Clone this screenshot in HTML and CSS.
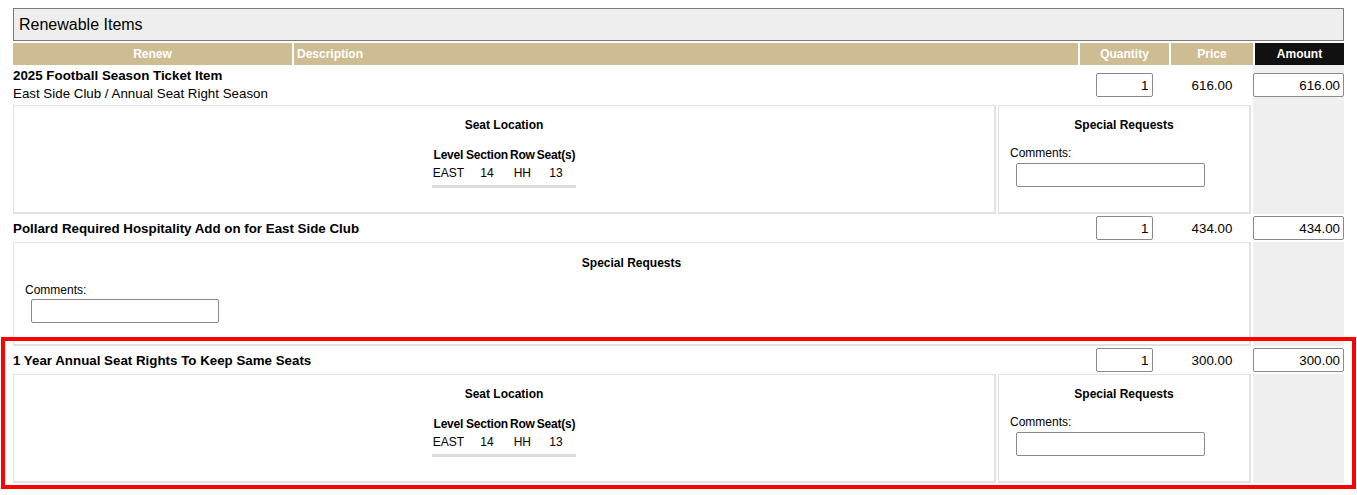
FILE: index.html
```html
<!DOCTYPE html>
<html>
<head>
<meta charset="utf-8">
<link rel="stylesheet" href="styles.css">
</head>
<body>
<div class="wrap">
  <div class="title">Renewable Items</div>
  <div class="thead">
    <div class="th th-center">Renew</div>
    <div class="th th-left">Description</div>
    <div class="th th-center">Quantity</div>
    <div class="th th-center">Price</div>
    <div class="th th-center th-dark">Amount</div>
  </div>

  <div class="item">
    <div class="item-head item-head-tall">
      <div class="desc">
        <div class="item-name">2025 Football Season Ticket Item</div>
        <div class="item-sub">East Side Club / Annual Seat Right Season</div>
      </div>
      <div class="qty"><input class="num-input qty-input" value="1"></div>
      <div class="price">616.00</div>
      <div class="amount amount-gray"><input class="num-input amt-input" value="616.00"></div>
    </div>
    <div class="item-detail">
      <div class="box seat-box">
        <div class="box-title">Seat Location</div>
        <table class="seat-table">
          <tr><th>Level</th><th>Section</th><th>Row</th><th>Seat(s)</th></tr>
          <tr><td>EAST</td><td>14</td><td>HH</td><td>13</td></tr>
        </table>
      </div>
      <div class="box special-box">
        <div class="box-title">Special Requests</div>
        <div class="comments-label">Comments:</div>
        <input class="comment-input">
      </div>
      <div class="gray-col"></div>
    </div>
  </div>

  <div class="item">
    <div class="item-head">
      <div class="desc">
        <div class="item-name">Pollard Required Hospitality Add on for East Side Club</div>
      </div>
      <div class="qty"><input class="num-input qty-input" value="1"></div>
      <div class="price">434.00</div>
      <div class="amount"><input class="num-input amt-input" value="434.00"></div>
    </div>
    <div class="item-detail">
      <div class="box special-wide">
        <div class="box-title">Special Requests</div>
        <div class="comments-label">Comments:</div>
        <input class="comment-input comment-input-wide">
      </div>
      <div class="gray-col"></div>
    </div>
  </div>

  <div class="item">
    <div class="item-head">
      <div class="desc">
        <div class="item-name">1 Year Annual Seat Rights To Keep Same Seats</div>
      </div>
      <div class="qty"><input class="num-input qty-input" value="1"></div>
      <div class="price">300.00</div>
      <div class="amount"><input class="num-input amt-input" value="300.00"></div>
    </div>
    <div class="item-detail">
      <div class="box seat-box">
        <div class="box-title">Seat Location</div>
        <table class="seat-table">
          <tr><th>Level</th><th>Section</th><th>Row</th><th>Seat(s)</th></tr>
          <tr><td>EAST</td><td>14</td><td>HH</td><td>13</td></tr>
        </table>
      </div>
      <div class="box special-box">
        <div class="box-title">Special Requests</div>
        <div class="comments-label">Comments:</div>
        <input class="comment-input">
      </div>
      <div class="gray-col"></div>
    </div>
  </div>
</div>
<div class="highlight"></div>
</body>
</html>
```

FILE: styles.css
```css
* { box-sizing: border-box; }
html, body { margin: 0; padding: 0; background: #fff; }
body {
  font-family: "Liberation Sans", Arial, sans-serif;
  font-size: 13.33px;
  color: #000;
  position: relative;
  width: 1357px;
  height: 495px;
  overflow: hidden;
}
.wrap {
  margin: 8px 0 0 13px;
  width: 1331px;
}
.title {
  height: 33px;
  border: 1px solid #7a7a7a;
  background: #eeeeee;
  font-size: 16px;
  line-height: 31px;
  padding-left: 5px;
}
.thead {
  margin-top: 2px;
  display: grid;
  grid-template-columns: 279px 786px 91px 84px 91px;
  height: 22px;
}
.th {
  background: #cebc92;
  color: #fff;
  font-weight: bold;
  font-size: 12px;
  line-height: 22px;
  border-left: 2px solid #fff;
}
.th:first-child { border-left: none; }
.th-center { text-align: center; }
.th-left { padding-left: 3px; }
.th-dark { background: #111; }

.item-head {
  display: grid;
  grid-template-columns: 1065px 91px 84px 91px;
  height: 28px;
  align-items: center;
}
.item-head-tall { height: 40px; }
.desc { align-self: center; }
.item-name { font-weight: bold; line-height: 17px; }
.item-sub { line-height: 20px; }
.qty { display: flex; justify-content: center; padding-left: 1px; }
.price { text-align: center; padding-left: 2px; }
.amount { height: 100%; display: flex; align-items: center; }
.amount-gray { background: #f0f0f0; }
.num-input {
  height: 24px;
  border: 1px solid #8a8a8a;
  border-radius: 2px;
  background: #fff;
  font-family: "Liberation Sans", Arial, sans-serif;
  font-size: 13.33px;
  text-align: right;
  padding: 0 3px;
  margin: 0;
  color: #000;
}
.qty-input { width: 57px; }
.amt-input { width: 91px; }

.item-detail {
  display: grid;
  grid-template-columns: 983px 253px 91px;
  column-gap: 2px;
}
.box {
  border: 1px solid #e2e2e2;
  border-right-width: 2px;
  border-bottom-width: 2px;
  background: #fff;
}
.seat-box, .special-box { height: 109px; }
.special-wide { grid-column: 1 / span 2; height: 104px; }
.gray-col { background: #efefef; }
.box-title {
  font-weight: bold;
  font-size: 12px;
  text-align: center;
  line-height: 14px;
  padding-top: 12px;
}
.special-wide .box-title { padding-top: 13px; }
.seat-table {
  margin: 14px auto 0;
  border-collapse: collapse;
  font-size: 12px;
  border-bottom: 3px solid #dcdcdc;
}
.seat-table th {
  font-weight: bold;
  padding: 0 1px;
  line-height: 18px;
  text-align: center;
  letter-spacing: -0.2px;
}
.seat-table td {
  padding: 0 1px 3px;
  line-height: 18px;
  text-align: center;
}
.comments-label {
  font-size: 12px;
  margin-top: 14px;
  margin-left: 11px;
  line-height: 14px;
}
.comment-input {
  display: block;
  margin: 3px 0 0 17px;
  width: 189px;
  height: 24px;
  border: 1px solid #8a8a8a;
  border-radius: 2px;
  background: #fff;
  padding: 0;
}
.special-wide .comments-label { margin-top: 13px; }
.comment-input-wide { width: 188px; margin-top: 2px; }

.highlight {
  position: absolute;
  left: 1px;
  top: 337px;
  width: 1355px;
  height: 152px;
  border: 4px solid #ff0000;
}
```
